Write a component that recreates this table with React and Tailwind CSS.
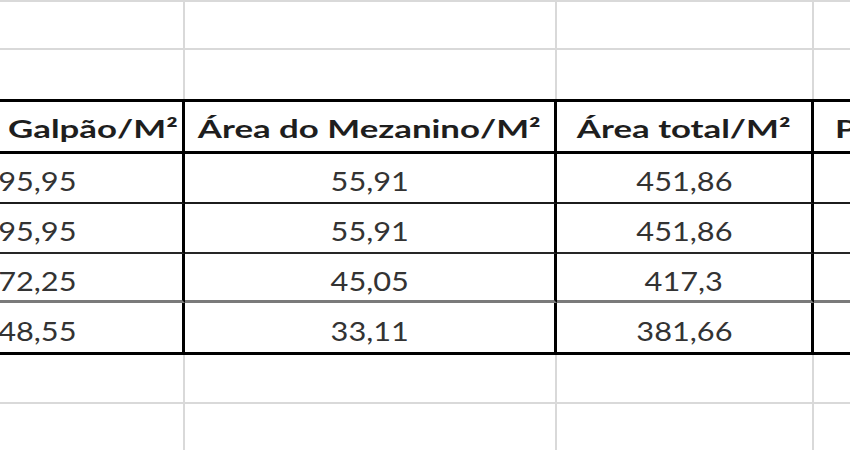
export default function App() {
  const light = "shrink-0 h-full border-r-2 border-b-2 border-r-[#d9d9d9] border-b-[#d9d9d9]";
  const lightLast = "shrink-0 h-full border-b-2 border-b-[#d9d9d9]";
  const lightNoB = "shrink-0 h-full border-r-2 border-r-[#d9d9d9]";
  const W = ["w-[311px]", "w-[372px]", "w-[257px]", "w-[300px]"];

  const LightRow = ({ h, noBottom }) => (
    <div className={"flex " + h}>
      {W.map((w, i) => (
        <div
          key={i}
          className={
            (noBottom ? (i === 3 ? "shrink-0 h-full" : lightNoB) : i === 3 ? lightLast : light) + " " + w
          }
        />
      ))}
    </div>
  );

  const headers = ["Área do Galpão/M²", "Área do Mezanino/M²", "Área total/M²"];
  const rows = [
    { h: "h-[50px]", b: "border-b-2 border-b-[#1c1c1c]", pb: "pb-[8px]", v: ["395,95", "55,91", "451,86"] },
    { h: "h-[50px]", b: "border-b-2 border-b-[#262626]", pb: "pb-[8px]", v: ["395,95", "55,91", "451,86"] },
    { h: "h-[49px]", b: "border-b-[3px] border-b-[#7a7a7a]", pb: "pb-[6px]", v: ["372,25", "45,05", "417,3"] },
    { h: "h-[52px]", b: "border-b-[3px] border-b-black", pb: "pb-[8px]", v: ["348,55", "33,11", "381,66"] },
  ];

  return (
    <div className="w-[850px] h-[450px] overflow-hidden bg-white font-[family-name:Lato,sans-serif]">
      <div className="flex flex-col ml-[-126px] mt-[-48px] w-[1240px]">
        <LightRow h="h-[50px]" />
        <LightRow h="h-[48px]" />
        <LightRow h="h-[49px]" noBottom />

        {/* header row */}
        <div className="flex h-[55px]">
          {headers.map((t, i) => (
            <div
              key={i}
              className={
                "shrink-0 h-full flex items-end justify-center pb-[10px] border-t-[3px] border-b-[3px] border-r-[3px] border-t-black border-b-black border-r-black " +
                W[i]
              }
            >
              <span className="inline-block whitespace-nowrap leading-none text-[24px] font-bold text-[#1e1e1e] scale-x-[1.45]">
                {t}
              </span>
            </div>
          ))}
          <div className={"shrink-0 h-full flex items-end pb-[10px] pl-[21px] border-t-[3px] border-b-[3px] border-t-black border-b-black " + W[3]}>
            <span className="inline-block whitespace-nowrap leading-none text-[24px] font-bold text-[#1e1e1e] origin-left scale-x-[1.45]">
              Preço
            </span>
          </div>
        </div>

        {/* data rows */}
        {rows.map((r, ri) => (
          <div key={ri} className={"flex " + r.h}>
            {r.v.map((v, i) => (
              <div
                key={i}
                className={
                  "shrink-0 h-full flex items-end justify-center border-r-[3px] border-r-black " + r.b + " " + r.pb + " " + W[i]
                }
              >
                <span className="inline-block whitespace-nowrap leading-none text-[26.5px] text-[#333333] scale-x-[1.16]">
                  {v}
                </span>
              </div>
            ))}
            <div className={"shrink-0 h-full " + r.b + " " + W[3]} />
          </div>
        ))}

        <LightRow h="h-[49px]" />
        <LightRow h="h-[50px]" />
      </div>
    </div>
  );
}
